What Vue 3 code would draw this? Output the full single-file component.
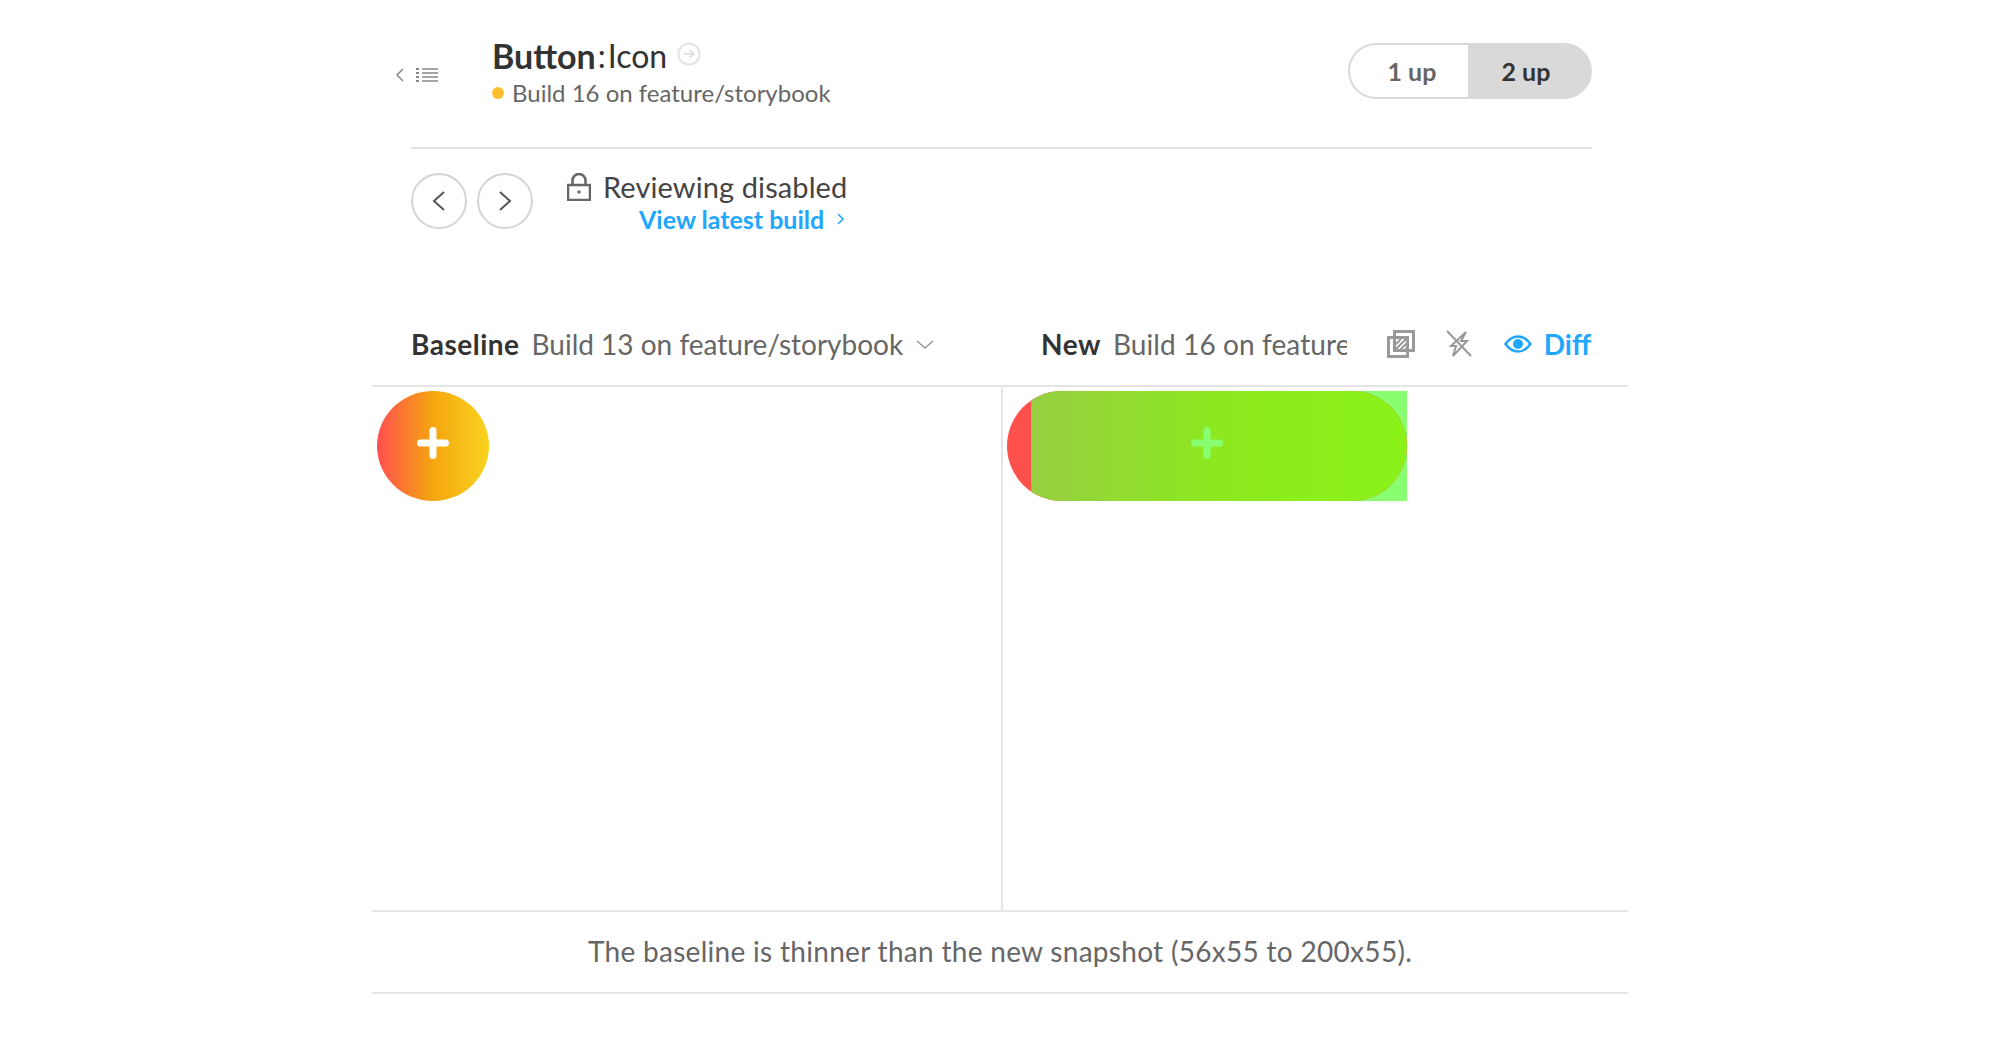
<template>
  <div class="page">
    <header class="header">
      <div class="back">
        <svg class="back-chevron" width="10" height="16" viewBox="0 0 10 16"><path d="M8 2 2 8l6 6" /></svg>
        <svg class="back-list" width="22" height="16" viewBox="0 0 22 16">
          <path d="M6 2h16M6 6h16M6 10h16M6 14h16" />
          <path class="dots" d="M0 2h3M0 6h3M0 10h3M0 14h3" />
        </svg>
      </div>
      <div class="title-block">
        <div class="title">
          <strong>Button</strong><span class="colon">:</span><span>Icon</span>
          <svg class="title-link" width="24" height="24" viewBox="0 0 24 24">
            <circle cx="12" cy="12" r="10.5" />
            <path d="M6.5 12h10M12.5 8l4 4-4 4" />
          </svg>
        </div>
        <div class="build"><span class="status-dot"></span>Build 16 on feature/storybook</div>
      </div>
      <div class="toggle">
        <button class="toggle-btn">1 up</button>
        <button class="toggle-btn active">2 up</button>
      </div>
    </header>

    <section class="review">
      <button class="round-btn">
        <svg width="16" height="24" viewBox="0 0 16 24"><path d="M13 3 3 12l10 9" /></svg>
      </button>
      <button class="round-btn">
        <svg width="16" height="24" viewBox="0 0 16 24"><path d="m3 3 10 9-10 9" /></svg>
      </button>
      <div class="review-text">
        <div class="review-title">
          <svg class="lock" width="24" height="28" viewBox="0 0 24 28">
            <path d="M1 12h22v15H1zM5.5 12V7.5a6.5 6.5 0 0 1 13 0V12" />
            <path class="keyhole" d="M12 17.5v3" />
          </svg>
          <span>Reviewing disabled</span>
        </div>
        <a class="latest-link">View latest build
          <svg width="8" height="12" viewBox="0 0 8 12"><path d="m2 1 5 5-5 5" /></svg>
        </a>
      </div>
    </section>

    <section class="compare">
      <div class="compare-head">
        <div class="baseline-label">
          <strong>Baseline</strong>
          <span>Build 13 on feature/storybook</span>
          <svg class="caret" width="18" height="10" viewBox="0 0 18 10"><path d="m1 1 8 7 8-7" /></svg>
        </div>
        <div class="new-label">
          <strong>New</strong>
          <span class="clipped">Build 16 on feature/storybook</span>
        </div>
        <div class="tools">
          <svg class="tool" width="28" height="28" viewBox="0 0 28 28">
            <path d="M7.5 1.5h19v19h-19z" />
            <path d="M1.5 7.5h19v19h-19z" />
            <path class="hatch" d="m9 14 5-5M9 19 19 9M13 20l7-7M18 20l2-2" />
          </svg>
          <svg class="tool flash" width="26" height="28" viewBox="0 0 26 28">
            <path d="M20 2 15 11h6L7 26l3-10H5z" />
            <path d="m1 1 24 25" />
          </svg>
          <button class="diff-btn">
            <svg width="28" height="18" viewBox="0 0 28 18">
              <path class="eye" d="M1.5 9C5 4 9 1.5 14 1.5S23 4 26.5 9C23 14 19 16.5 14 16.5S5 14 1.5 9z" />
              <circle cx="14" cy="9" r="5" />
            </svg>
            Diff
          </button>
        </div>
      </div>

      <div class="panels">
        <div class="panel panel-left">
          <div class="fab">
            <svg width="36" height="36" viewBox="0 0 36 36"><path d="M18 5.5v25M5.5 18h25" /></svg>
          </div>
        </div>
        <div class="panel panel-right">
          <svg class="diff-shot" width="400" height="110" viewBox="0 0 400 110">
            <defs>
              <linearGradient id="pillGrad" x1="24" x2="400" y1="0" y2="0" gradientUnits="userSpaceOnUse">
                <stop offset="0" stop-color="#96cf42" />
                <stop offset="0.5" stop-color="#8de91f" />
                <stop offset="1" stop-color="#8bf219" />
              </linearGradient>
              <clipPath id="pillClip"><rect x="24" y="0" width="376" height="110" /></clipPath>
            </defs>
            <rect x="340" y="0" width="60" height="110" fill="#88ff70" />
            <rect x="0" y="0" width="400" height="110" rx="55" fill="#ff514b" />
            <rect x="0" y="0" width="400" height="110" rx="55" fill="url(#pillGrad)" clip-path="url(#pillClip)" />
            <path d="M200 39.5v25M187.500 52h25" stroke="#88ff70" stroke-width="7" stroke-linecap="round" fill="none" />
          </svg>
        </div>
      </div>

      <div class="caption">The baseline is thinner than the new snapshot (56x55 to 200x55).</div>
    </section>
  </div>
</template>

<script setup>
</script>

<style>
html, body {
  margin: 0;
  background: #fff;
}
</style>

<style scoped>
.page {
  width: 1256px;
  margin: 0 auto;
  font-family: "Lato", "Open Sans", sans-serif;
  color: #333;
}

.header {
  display: flex;
  align-items: flex-start;
  height: 149px;
  margin: 0 36px 0 39px;
  padding-top: 36px;
  box-sizing: border-box;
  border-bottom: 2px solid #e5e5e5;
}

.back {
  display: flex;
  align-items: center;
  gap: 11px;
  width: 97px;
  height: 42px;
  margin: 18px 0 0 -16px;
  flex-shrink: 0;
}
.back svg { fill: none; }
.back-chevron { stroke: #888; stroke-width: 1.5; }
.back-list { stroke: #888; stroke-width: 1.5; }
.back-list .dots { stroke-width: 2; }

.title-block { flex: 1; }

.title {
  display: flex;
  align-items: center;
  font-size: 32px;
  line-height: 40px;
}
.title strong { font-size: 34px; font-weight: 700; }
.colon { margin: 0 2px; }

.title-link {
  margin: -4px 0 0 10px;
  fill: none;
  stroke: #e3e3e3;
  stroke-width: 2;
}

.build {
  display: flex;
  align-items: center;
  margin-top: 1px;
  font-size: 24px;
  line-height: 32px;
  color: #666;
}

.status-dot {
  width: 12px;
  height: 12px;
  margin-right: 8px;
  border-radius: 50%;
  background: #fdbf2d;
}

.toggle {
  display: flex;
  width: 244px;
  height: 56px;
  margin-top: 7px;
}

.toggle-btn {
  width: 120px;
  padding: 0 0 0 6px;
  border: 2px solid #d9d9d9;
  background: #fff;
  font-family: inherit;
  font-size: 25px;
  font-weight: 700;
  color: #666;
}
.toggle-btn:first-child {
  border-radius: 28px 0 0 28px;
  border-right: none;
}
.toggle-btn.active {
  width: 124px;
  padding: 0 8px 0 0;
  background: #d9d9d9;
  color: #333;
  border-radius: 0 28px 28px 0;
}

.review {
  display: flex;
  align-items: flex-start;
  height: 163px;
  margin-left: 39px;
  padding-top: 24px;
  box-sizing: border-box;
}

.round-btn {
  display: flex;
  align-items: center;
  justify-content: center;
  width: 56px;
  height: 56px;
  margin-right: 10px;
  padding: 0;
  border: 2px solid #d4d4d4;
  border-radius: 50%;
  background: #fff;
}
.round-btn svg {
  fill: none;
  stroke: #555;
  stroke-width: 2;
}

.review-text { margin: -1px 0 0 24px; }

.review-title {
  display: flex;
  align-items: center;
  gap: 12px;
  font-size: 29px;
  letter-spacing: 0.1px;
  line-height: 30px;
  color: #444;
}

.lock {
  fill: none;
  stroke: #666;
  stroke-width: 2.5;
}
.lock .keyhole { stroke-width: 3; }

.latest-link {
  display: flex;
  align-items: center;
  gap: 12px;
  margin: 2px 0 0 72px;
  font-size: 25px;
  font-weight: 700;
  line-height: 30px;
  color: #1ea7fd;
}
.latest-link svg {
  fill: none;
  stroke: #1ea7fd;
  stroke-width: 1.5;
}

.compare-head {
  display: flex;
  align-items: center;
  height: 75px;
  padding: 0 36px 10px 39px;
  box-sizing: border-box;
  border-bottom: 2px solid #e5e5e5;
  font-size: 28px;
}
.compare-head strong { letter-spacing: 0.5px; }

.baseline-label {
  display: flex;
  align-items: center;
  gap: 12px;
  width: 630px;
  flex-shrink: 0;
}
.baseline-label span,
.new-label span { color: #666; }

.caret {
  margin: 3px 0 0 1px;
  fill: none;
  stroke: #999;
  stroke-width: 1.5;
}

.new-label {
  display: flex;
  gap: 12px;
  width: 306px;
  flex-shrink: 0;
  overflow: hidden;
  white-space: nowrap;
}
.clipped { overflow: hidden; letter-spacing: 0.1px; }

.tools {
  display: flex;
  align-items: center;
  justify-content: space-between;
  flex: 1;
  padding: 0 1px 0 40px;
}

.tool {
  fill: none;
  stroke: #999;
  stroke-width: 3;
}
.tool .hatch { stroke-width: 2; }
.flash { stroke-width: 2; }

.diff-btn {
  display: flex;
  align-items: center;
  gap: 12px;
  padding: 0;
  border: none;
  background: none;
  font-family: inherit;
  font-size: 28px;
  font-weight: 700;
  color: #1ea7fd;
}
.diff-btn .eye {
  fill: none;
  stroke: #1ea7fd;
  stroke-width: 2.5;
}
.diff-btn circle { fill: #1ea7fd; }

.panels {
  display: flex;
  height: 523px;
  border-bottom: 2px solid #e5e5e5;
}

.panel {
  flex: 1;
  padding: 4px 0 0 4px;
  box-sizing: border-box;
}
.panel-left {
  flex: none;
  width: 629px;
  padding-left: 5px;
}
.panel-right {
  border-left: 2px solid #e5e5e5;
}

.fab {
  display: flex;
  align-items: center;
  justify-content: center;
  width: 112px;
  height: 110px;
  border-radius: 50%;
  background: linear-gradient(90deg, #ff4f4f, #f5a60f 50%, #f8d41f);
}
.fab svg {
  fill: none;
  stroke: #fff;
  stroke-width: 7;
  stroke-linecap: round;
  margin-top: -6px;
}

.diff-shot { display: block; }

.caption {
  height: 80px;
  line-height: 78px;
  border-bottom: 2px solid #e5e5e5;
  text-align: center;
  font-size: 28px;
  letter-spacing: 0.3px;
  color: #666;
}
</style>
